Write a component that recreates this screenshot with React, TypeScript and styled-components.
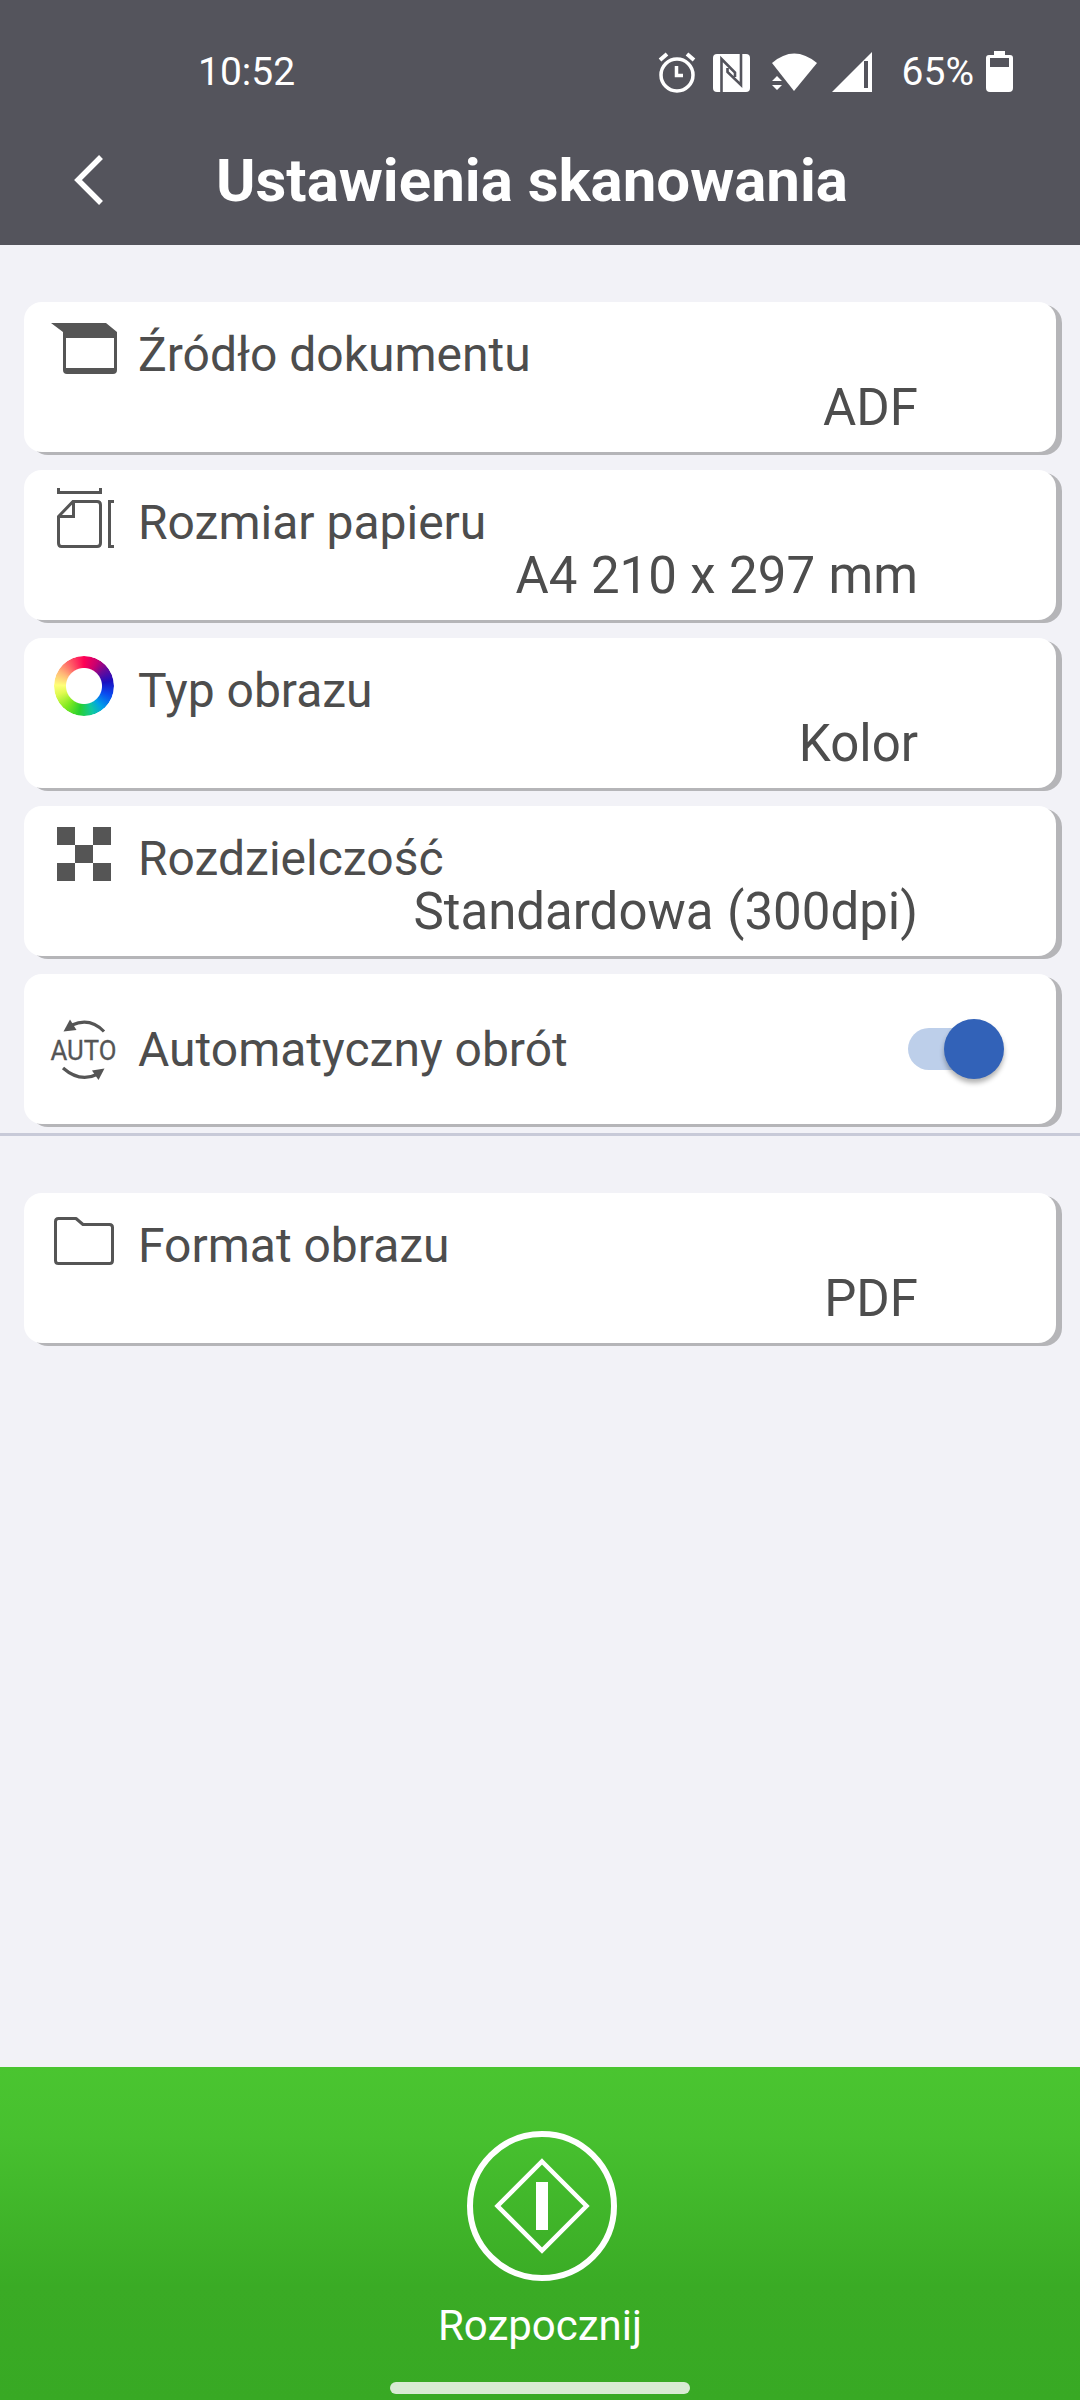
import React from "react";
import styled, { createGlobalStyle } from "styled-components";

const INK = "#4d4d4d";
const ICON = "#555555";

const GlobalStyle = createGlobalStyle`
  * { box-sizing: border-box; }
  body { margin: 0; background: #f2f2f7; font-family: Roboto, "Noto Sans", sans-serif; }
`;

const Screen = styled.div`
  width: 1080px;
  height: 2400px;
  display: flex;
  flex-direction: column;
  background: #f2f2f7;
  overflow: hidden;
`;

const Header = styled.header`
  height: 245px;
  flex: none;
  display: flex;
  flex-direction: column;
  background: #54545c;
  color: #fff;
`;

const StatusBar = styled.div`
  height: 118px;
  padding: 26px 66px 0 198px;
  display: flex;
  align-items: center;
  justify-content: space-between;
`;

const StatusText = styled.span<{ $gap?: number }>`
  font-size: 39px;
  line-height: 46px;
  margin-left: ${(p) => p.$gap ?? 0}px;
`;

const StatusIcons = styled.div`
  display: flex;
  align-items: center;
`;

const TitleBar = styled.div`
  height: 127px;
  padding: 0 0 3px 72px;
  display: flex;
  align-items: center;
`;

const BackButton = styled.button`
  width: 32px;
  height: 54px;
  padding: 0;
  border: 0;
  background: none;
  display: flex;
`;

const Title = styled.h1`
  margin: 2px 0 0 112px;
  font-size: 60px;
  line-height: 70px;
  font-weight: 700;
  white-space: nowrap;
`;

const Group = styled.section`
  padding: 57px 24px 6px;
  display: flex;
  flex-direction: column;
  gap: 18px;
`;

const Separator = styled.hr`
  width: 100%;
  height: 3px;
  margin: 3px 0 0;
  border: 0;
  background: #c8cad8;
`;

const Card = styled.div<{ $center?: boolean }>`
  height: 150px;
  width: 1032px;
  padding: ${(p) => (p.$center ? "0 52px 0 24px" : "14px 138px 0 24px")};
  display: flex;
  flex-direction: ${(p) => (p.$center ? "row" : "column")};
  align-items: ${(p) => (p.$center ? "center" : "stretch")};
  justify-content: ${(p) => (p.$center ? "space-between" : "flex-start")};
  background: #fff;
  border-radius: 18px;
  box-shadow: 6px 3px 0 #b5b5b8;
`;

const CardHead = styled.div`
  height: 66px;
  display: flex;
  align-items: flex-start;
`;

const Glyph = styled.span`
  width: 72px;
  height: 66px;
  display: flex;
`;

const Label = styled.span<{ $top?: number }>`
  margin: ${(p) => p.$top ?? 11}px 0 0 18px;
  font-size: 48px;
  line-height: 56px;
  color: ${INK};
  white-space: nowrap;
`;

const Value = styled.span`
  margin-top: -4px;
  font-size: 51px;
  line-height: 60px;
  word-spacing: 0.8px;
  color: ${INK};
  text-align: right;
  white-space: nowrap;
`;

const Wheel = styled.span`
  width: 60px;
  height: 60px;
  margin: 4px 0 0 6px;
  border-radius: 50%;
  background: conic-gradient(#ff0055, #c80070 28deg, #6b0a98 52deg, #1a0fc0 80deg, #0a4cf0 110deg, #00a0e8 140deg, #10c8a0 162deg, #28d030 190deg, #80ea20 220deg, #e0fa50 252deg, #ffff78 272deg, #ffb878 300deg, #ff6868 325deg, #ff0055);
  mask: radial-gradient(circle, transparent 17.5px, #000 18.5px);
`;

const Switch = styled.button`
  padding: 0;
  border: 0;
  display: flex;
  align-items: center;
  background: none;
`;

const Track = styled.span`
  width: 66px;
  height: 42px;
  margin-right: -30px;
  border-radius: 21px 0 0 21px;
  background: #bdcfea;
`;

const Thumb = styled.span`
  width: 60px;
  height: 60px;
  border-radius: 50%;
  background: #3262b8;
  box-shadow: 0 4px 5px rgba(0, 0, 0, 0.3);
`;

const StartPanel = styled.footer`
  height: 333px;
  margin-top: auto;
  padding-top: 64px;
  display: flex;
  flex-direction: column;
  align-items: center;
  background: linear-gradient(#4ac530 0, #47c02f 70px, #3aab25 220px, #38a924 100%);
  color: #fff;
`;

const StartIcon = styled.svg`
  margin-left: 4px;
  flex: none;
`;

const StartLabel = styled.span`
  margin-top: 20px;
  font-size: 42px;
  line-height: 50px;
`;

const HomeIndicator = styled.div`
  width: 300px;
  height: 12px;
  margin-top: 31px;
  border-radius: 6px;
  background: #d8ebd3;
`;

const SourceIcon = () => (
  <svg width="72" height="66" viewBox="0 0 72 66">
    <path d="M3 7H58L69 16V54q0 4-4 4H19q-4 0-4-4V16Z" fill={ICON} />
    <path d="M18 22H66V52H18Z" fill="#fff" />
  </svg>
);

const PaperIcon = () => (
  <svg width="72" height="66" viewBox="0 0 72 66" fill="none" stroke={ICON} strokeWidth="3">
    <path d="M10.500 4V8.500H52.500V4" />
    <path d="M25 17.500H49q3.500 0 3.500 3.500V59q0 3.500-3.500 3.500H13.500q-3 0-3-3.500V32.500Z" />
    <path d="M25.500 18V32.500H11" />
    <path d="M66 17.500H61.500V62.500H66" />
  </svg>
);

const PixelsIcon = () => (
  <svg width="72" height="66" viewBox="0 0 72 66" fill={ICON}>
    <path d="M9 7h18v18H9zM45 7h18v18H45zM27 25h18v18H27zM9 43h18v18H9zM45 43h18v18H45z" />
  </svg>
);

const AutoIcon = () => (
  <svg width="72" height="66" viewBox="0 0 72 66">
    <path d="M24 9Q42 1 56 15.500" fill="none" stroke={ICON} strokeWidth="3.200" />
    <path d="M22 3.500L15.500 15.500L28.500 14Z" fill={ICON} />
    <path d="M15 52Q32 67 50 58" fill="none" stroke={ICON} strokeWidth="3.200" />
    <path d="M44 54.500L56.500 52.500L50.500 64Z" fill={ICON} />
    <text x="2.500" y="44" textLength="66" lengthAdjust="spacingAndGlyphs" fontFamily="Roboto" fontSize="27" fill={ICON} stroke={ICON} strokeWidth="0.300">AUTO</text>
  </svg>
);

const FolderIcon = () => (
  <svg width="72" height="66" viewBox="0 0 72 66" fill="none" stroke={ICON} strokeWidth="3" strokeLinejoin="round">
    <path d="M10.500 11.500H28L35 17.500H61.500q3 0 3 3V53.500q0 3-3 3H10.500q-3 0-3-3V14.500q0-3 3-3Z" />
  </svg>
);

type Row = { label: string; value: string; icon: React.ReactNode };

const SettingCard = ({ label, value, icon }: Row) => (
  <Card>
    <CardHead>
      <Glyph>{icon}</Glyph>
      <Label>{label}</Label>
    </CardHead>
    <Value>{value}</Value>
  </Card>
);

const rows: Row[] = [
  { label: "Źródło dokumentu", value: "ADF", icon: <SourceIcon /> },
  { label: "Rozmiar papieru", value: "A4 210 x 297 mm", icon: <PaperIcon /> },
  { label: "Typ obrazu", value: "Kolor", icon: <Wheel /> },
  { label: "Rozdzielczość", value: "Standardowa (300dpi)", icon: <PixelsIcon /> },
];

export default function App() {
  return (
    <Screen>
      <GlobalStyle />
      <Header>
        <StatusBar>
          <StatusText>10:52</StatusText>
          <StatusIcons>
            <svg width="226" height="44" viewBox="0 0 226 44" fill="#fff">
              <circle cx="22" cy="25" r="16" fill="none" stroke="#fff" strokeWidth="3.500" />
              <path d="M21.500 16V25.500H28" fill="none" stroke="#fff" strokeWidth="3.500" />
              <path d="M5 10L12 4M32 4L39 10" fill="none" stroke="#fff" strokeWidth="4" />
              <rect x="58" y="4" width="37" height="38" rx="4" />
              <path d="M66.500 42V9L80 22.500V27M86 4V35L72.500 22V18" fill="none" stroke="#54545c" strokeWidth="2.600" />
              <path d="M117 13Q139-6 162 13L139 41Z" />
              <path d="M117 31l5-5 5 5zM117 35h10l-5 5z" />
              <path d="M177 42L217 2V42Z" />
              <rect x="209" y="11" width="4" height="27" fill="#54545c" />
            </svg>
            <StatusText $gap={21}>65%</StatusText>
            <svg width="40" height="44" viewBox="0 0 40 44" fill="#fff">
              <path d="M20 1h11v4h5q3 0 3 3V38q0 4-4 4H16q-4 0-4-4V8q0-3 3-3h5Z" />
              <rect x="16" y="8" width="19" height="9" fill="#54545c" />
            </svg>
          </StatusIcons>
        </StatusBar>
        <TitleBar>
          <BackButton aria-label="Wstecz">
            <svg width="32" height="54" viewBox="0 0 32 54">
              <path d="M29 4L6 27L29 50" fill="none" stroke="#fff" strokeWidth="5.500" />
            </svg>
          </BackButton>
          <Title>Ustawienia skanowania</Title>
        </TitleBar>
      </Header>
      <Group>
        {rows.map((row) => (
          <SettingCard key={row.label} {...row} />
        ))}
        <Card $center>
          <CardHead>
            <Glyph><AutoIcon /></Glyph>
            <Label $top={6}>Automatyczny obrót</Label>
          </CardHead>
          <Switch role="switch" aria-checked aria-label="Automatyczny obrót">
            <Track />
            <Thumb />
          </Switch>
        </Card>
      </Group>
      <Separator />
      <Group>
        <SettingCard label="Format obrazu" value="PDF" icon={<FolderIcon />} />
      </Group>
      <StartPanel>
        <StartIcon width="150" height="150" viewBox="0 0 150 150" fill="none" stroke="#fff">
          <circle cx="75" cy="75" r="72" strokeWidth="6" />
          <path d="M75 30.500L119.500 75L75 119.500L30.500 75Z" strokeWidth="4.500" />
          <path d="M75 51V99" strokeWidth="12" />
        </StartIcon>
        <StartLabel>Rozpocznij</StartLabel>
        <HomeIndicator />
      </StartPanel>
    </Screen>
  );
}
